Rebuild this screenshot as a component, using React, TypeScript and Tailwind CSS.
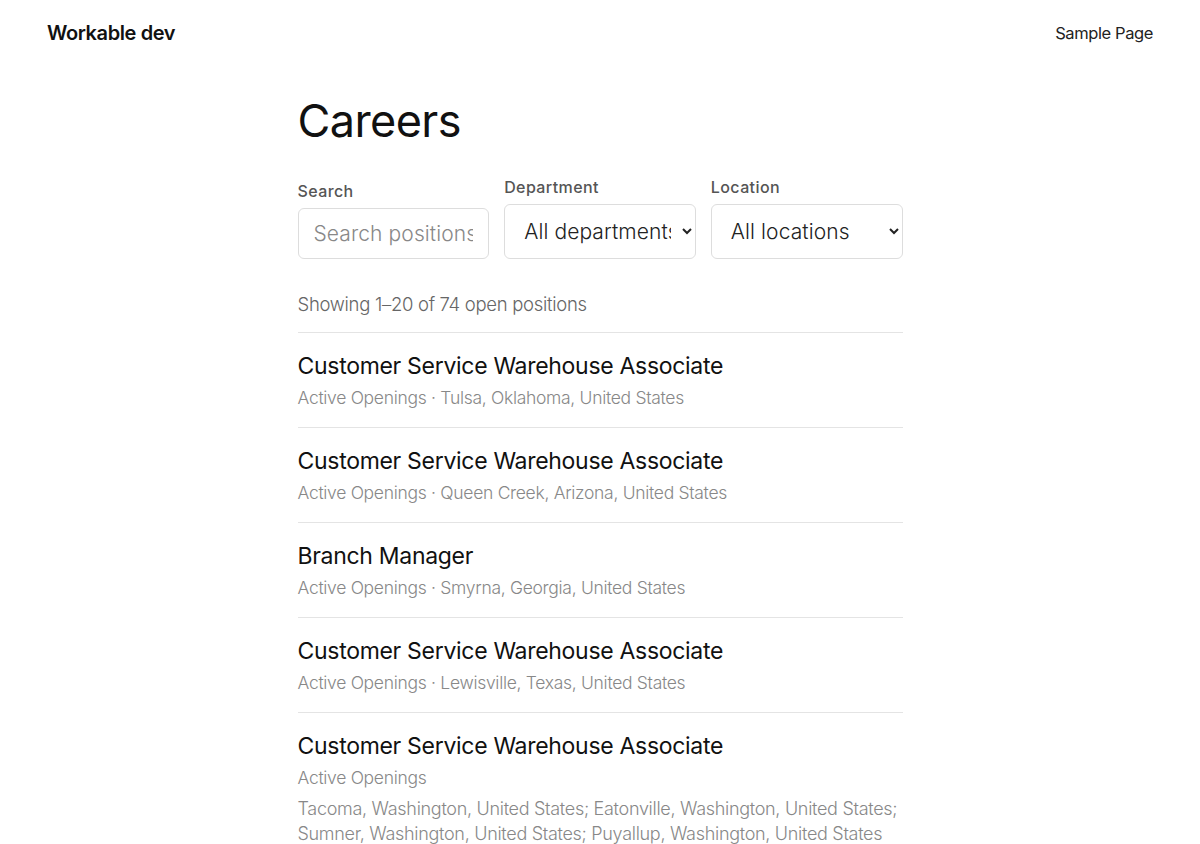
import React from 'react';

const jobs = [
  { title: 'Customer Service Warehouse Associate', loc: 'Tulsa, Oklahoma, United States' },
  { title: 'Customer Service Warehouse Associate', loc: 'Queen Creek, Arizona, United States' },
  { title: 'Branch Manager', loc: 'Smyrna, Georgia, United States' },
  { title: 'Customer Service Warehouse Associate', loc: 'Lewisville, Texas, United States' },
];

const App: React.FC = () => {
  return (
    <div className="min-h-screen bg-white text-[#111] font-['Inter',sans-serif]">
      <header className="flex items-center justify-between px-[47px] pt-[18px] pb-[40px]">
        <div className="text-[20px] font-semibold tracking-[-0.4px]">Workable dev</div>
        <div className="text-[16.5px] text-[#222] tracking-[-0.4px]">Sample Page</div>
      </header>

      <main className="w-[605px] mx-auto">
        <h1 className="mt-[10px] text-[45px] font-normal leading-none tracking-[-0.6px] text-[#111]">Careers</h1>

        <div className="grid grid-cols-3 gap-[15px] items-end mt-[32px]">
          <label className="flex flex-col gap-[5px]">
            <span className="text-[16px] font-medium text-[#555] tracking-[0.4px]">Search</span>
            <input
              placeholder="Search positions"
              className="h-[51px] px-[15px] border border-[#ddd] rounded-[6px] text-[21px] font-light tracking-[0.1px] placeholder:text-[#888] outline-none"
            />
          </label>
          <label className="flex flex-col gap-[5px]">
            <span className="text-[16px] font-medium text-[#555] tracking-[0.4px]">Department</span>
            <select className="h-[55px] pl-[15px] pr-[8px] border border-[#ddd] rounded-[6px] text-[21px] font-light tracking-[0.1px] text-[#222] bg-white">
              <option>All departments</option>
            </select>
          </label>
          <label className="flex flex-col gap-[5px]">
            <span className="text-[16px] font-medium text-[#555] tracking-[0.4px]">Location</span>
            <select className="h-[55px] pl-[15px] pr-[8px] border border-[#ddd] rounded-[6px] text-[21px] font-light tracking-[0.1px] text-[#222] bg-white">
              <option>All locations</option>
            </select>
          </label>
        </div>

        <p className="mt-[32px] text-[18.5px] font-light text-[#666] tracking-[-0.3px]">Showing 1–20 of 74 open positions</p>

        <ul className="mt-[13px] border-t border-[#e4e4e4]">
          {jobs.map((j, i) => (
            <li key={i} className="border-b border-[#e4e4e4] pt-[18px] pb-[17px]">
              <div className="text-[23px] leading-[30px] text-[#111] tracking-[-0.3px]">{j.title}</div>
              <div className="mt-[5px] text-[17.5px] font-light leading-[24px] text-[#888] tracking-[-0.3px]">
                Active Openings · {j.loc}
              </div>
            </li>
          ))}
          <li className="pt-[18px] pb-[18px]">
            <div className="text-[23px] leading-[30px] text-[#111] tracking-[-0.3px]">Customer Service Warehouse Associate</div>
            <div className="mt-[5px] text-[17.5px] font-light leading-[24px] text-[#888] tracking-[-0.3px]">Active Openings</div>
            <div className="mt-[6px] text-[18px] font-light leading-[25px] text-[#888] tracking-[-0.3px]">
              Tacoma, Washington, United States; Eatonville, Washington, United States; Sumner, Washington, United States; Puyallup, Washington, United States
            </div>
          </li>
        </ul>
      </main>
    </div>
  );
};

export default App;
